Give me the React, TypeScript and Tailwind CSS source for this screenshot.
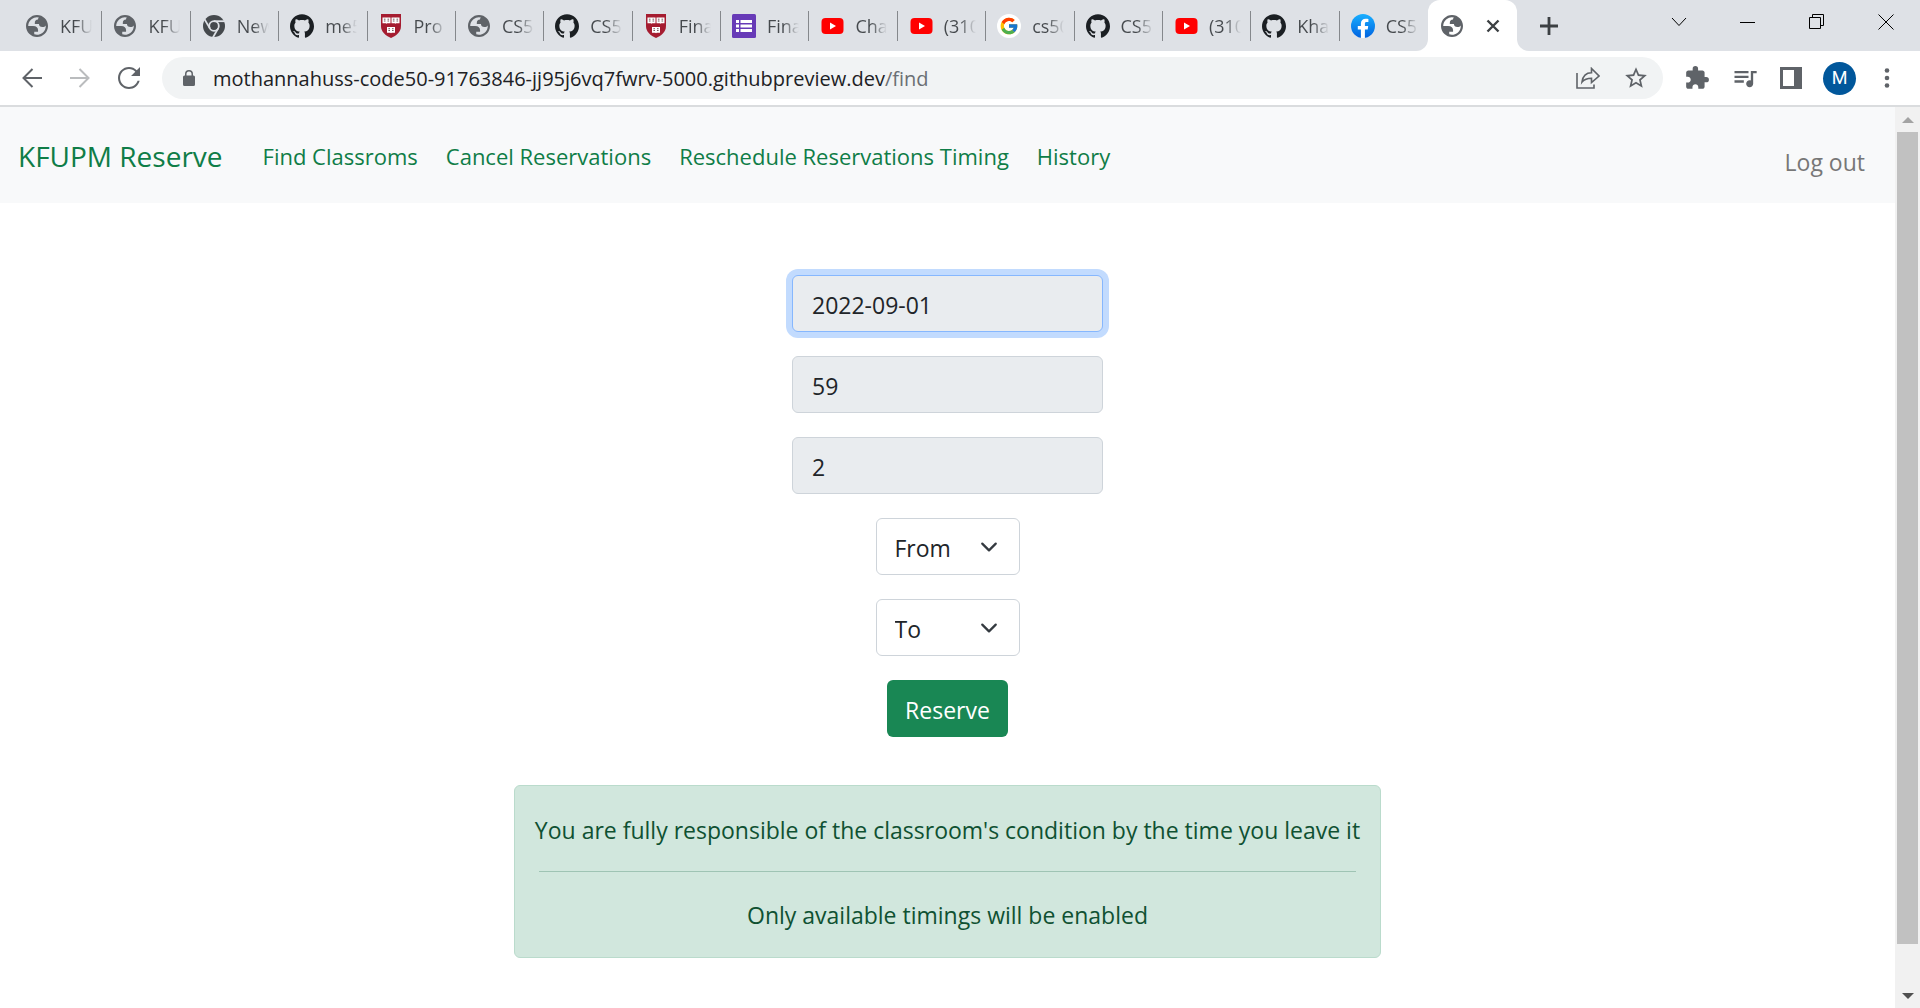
import React from "react";
import { FcGoogle } from "react-icons/fc";
import { MdExtension, MdQueueMusic, MdStarBorder } from "react-icons/md";
import { SiGithub } from "react-icons/si";

type Site = "globe" | "chrome" | "github" | "harvard" | "forms" | "youtube" | "google" | "facebook";

const tabs: { site: Site; title: string }[] = [
  { site: "globe", title: "KFU" },
  { site: "globe", title: "KFU" },
  { site: "chrome", title: "New" },
  { site: "github", title: "me5" },
  { site: "harvard", title: "Pro" },
  { site: "globe", title: "CS5" },
  { site: "github", title: "CS5" },
  { site: "harvard", title: "Fina" },
  { site: "forms", title: "Fina" },
  { site: "youtube", title: "Cha" },
  { site: "youtube", title: "(310" },
  { site: "google", title: "cs50" },
  { site: "github", title: "CS5" },
  { site: "youtube", title: "(310" },
  { site: "github", title: "Kha" },
  { site: "facebook", title: "CS5" },
];

function Globe() {
  return (
    <svg viewBox="2 2 20 20" className="size-[22px] fill-[#5f6368]">
      <path
        fillRule="evenodd"
        d="M12 2C6.480 2 2 6.480 2 12s4.480 10 10 10 10-4.480 10-10S17.520 2 12 2zM4 12h4.400c3.407.022 4.922 1.730 4.543 5.127H9.488v2.470a8.004 8.004 0 0 0 10.498-8.083C19.327 12.504 18.332 13 17 13c-2.137 0-3.206-.916-3.206-2.750h-3.748c-.274-2.728.683-4.092 2.870-4.092 0-.975.327-1.597.811-1.970A8.004 8.004 0 0 0 4 12z"
      />
    </svg>
  );
}

function Book({ x, y }: { x: number; y: number }) {
  return (
    <g transform={`translate(${x} ${y})`}>
      <path d="M0 .6h8v5.600H4.800L4 6.800l-.8-.6H0z" fill="#fff" />
      <path d="M1.400 2.200h1.600M1.400 4h1.600M5 2.200h1.600M5 4h1.600" stroke="#6b4a4e" strokeWidth=".9" />
    </g>
  );
}

function SiteIcon({ site }: { site: Site }) {
  switch (site) {
    case "globe":
      return <Globe />;
    case "chrome":
      return (
        <svg viewBox="0 0 22 22" className="size-[22px]">
          <circle cx="11" cy="11" r="11" fill="#45494d" />
          <g fill="none" stroke="#dee1e6" strokeWidth="1.8">
            <circle cx="11" cy="11" r="4.8" />
            <path d="M11 6.200h11" />
            <path d="M11 6.200h11" transform="rotate(120 11 11)" />
            <path d="M11 6.200h11" transform="rotate(240 11 11)" />
          </g>
        </svg>
      );
    case "github":
      return <SiGithub className="size-6 text-[#1b1f23]" />;
    case "google":
      return (
        <span className="flex size-6 items-center justify-center rounded-full bg-white">
          <FcGoogle className="size-5" />
        </span>
      );
    case "harvard":
      return (
        <svg viewBox="0 0 24 24" className="size-6">
          <path d="M2 0h20v12c0 6-4.500 9.500-10 12C6.500 21.500 2 18 2 12z" fill="#a51c30" />
          <Book x={3.5} y={3} />
          <Book x={12.5} y={3} />
          <Book x={8} y={12.5} />
        </svg>
      );
    case "forms":
      return (
        <svg viewBox="0 0 24 24" className="size-6">
          <rect width="24" height="24" rx="1.5" fill="#673ab7" />
          <path d="M4 6h3v3H4zM8.500 6H20v3H8.500zM4 10.500h3v3H4zM8.500 10.500H20v3H8.500zM4 15h3v3H4zM8.500 15H20v3H8.500z" fill="#fff" />
        </svg>
      );
    case "youtube":
      return (
        <svg viewBox="0 0 24 24" className="size-6">
          <rect x="1.5" y="4" width="22" height="16" rx="4" fill="#f00" />
          <path d="M10 8.500v7l6-3.500z" fill="#fff" />
        </svg>
      );
    case "facebook":
      return (
        <svg viewBox="0 0 24 24" className="size-6">
          <defs>
            <linearGradient id="fb" x1="0" y1="0" x2="0" y2="1">
              <stop offset="0" stopColor="#19afff" />
              <stop offset="1" stopColor="#0062e0" />
            </linearGradient>
          </defs>
          <circle cx="12" cy="12" r="12" fill="url(#fb)" />
          <path d="M16.700 15.500l.5-3.500h-3.300V9.800c0-1 .4-1.700 1.800-1.700h1.700V5c-.9-.1-1.900-.3-2.700-.3-2.800 0-4.800 1.700-4.800 4.800V12H6.800v3.500h3.100v8.400c.7.100 1.400.1 2 .1s1.300 0 2-.1v-8.400z" fill="#fff" />
        </svg>
      );
  }
}

function TabStrip() {
  return (
    <div className="flex h-[51px] shrink-0 bg-[#dee1e6] pl-[14px]">
      <div role="tablist" className="flex">
        <div className="flex w-[1414px] min-w-0">
          {tabs.map((tab, i) => (
            <button key={i} role="tab" aria-selected="false" className="flex min-w-0 flex-1 items-center pl-[11px]">
              <span className="flex size-6 shrink-0 items-center justify-center">
                <SiteIcon site={tab.site} />
              </span>
              <span className="ml-[11px] w-[32px] overflow-hidden bg-linear-to-r from-[#45494d] from-50% to-transparent bg-clip-text text-left text-lg leading-6 whitespace-nowrap text-transparent">
                {tab.title}
              </span>
              <span className={i < tabs.length - 1 ? "ml-auto h-[30px] w-px bg-[#85888c]" : "hidden"} />
            </button>
          ))}
        </div>
        <div role="tab" aria-selected="true" className="relative flex w-[89px] items-center justify-between rounded-t-xl bg-white pr-[17px] pl-[13px]">
          <span className="absolute bottom-0 -left-3 size-3 bg-white">
            <span className="block size-3 rounded-br-xl bg-[#dee1e6]" />
          </span>
          <span className="absolute -right-3 bottom-0 size-3 bg-white">
            <span className="block size-3 rounded-bl-xl bg-[#dee1e6]" />
          </span>
          <Globe />
          <button aria-label="Close tab">
            <svg viewBox="0 0 14 14" className="size-[14px] stroke-[#3c4043] stroke-[2.4]">
              <path d="M1.500 1.500l11 11M12.500 1.500l-11 11" />
            </svg>
          </button>
        </div>
      </div>
      <button aria-label="New tab" className="ml-[23px]">
        <svg viewBox="0 0 18 18" className="size-[18px] stroke-[#3c4043] stroke-[2.8]">
          <path d="M9 0v18M0 9h18" />
        </svg>
      </button>
      <div className="mr-[26px] mb-2 ml-auto flex items-center gap-[53px]">
        <button aria-label="Search tabs">
          <svg viewBox="0 0 16 16" className="size-4 fill-none stroke-black">
            <path d="M1 4l7 7.500L15 4" />
          </svg>
        </button>
        <button aria-label="Minimize">
          <svg viewBox="0 0 16 16" className="size-4 stroke-black">
            <path d="M0 8.500h15" />
          </svg>
        </button>
        <button aria-label="Restore">
          <svg viewBox="0 0 16 16" className="size-4 fill-none stroke-black">
            <path d="M.5 3.500h11v11H.5zM3.500 3.500v-3h11v11h-3" />
          </svg>
        </button>
        <button aria-label="Close">
          <svg viewBox="0 0 16 16" className="size-4 stroke-black">
            <path d="M.5.5l15 15M15.500.5l-15 15" />
          </svg>
        </button>
      </div>
    </div>
  );
}

function Toolbar() {
  return (
    <div className="flex h-14 shrink-0 items-center border-b-2 border-[#dadcde] bg-white text-[#5f6368]">
      <div className="flex items-center gap-7 pr-[22px] pl-[22px]">
        <button aria-label="Back">
          <svg viewBox="0 0 20 20" className="size-5 fill-none stroke-[#5f6368] stroke-2">
            <path d="M20 10H1.500M10.500 1L1.500 10l9 9" />
          </svg>
        </button>
        <button aria-label="Forward">
          <svg viewBox="0 0 20 20" className="size-5 fill-none stroke-[#babcbe] stroke-2">
            <path d="M0 10h18.500M9.500 1l9 9-9 9" />
          </svg>
        </button>
        <button aria-label="Reload">
          <svg viewBox="4 4 16 16" className="size-[22px] fill-current">
            <path d="M17.650 6.350C16.200 4.900 14.210 4 12 4c-4.420 0-7.990 3.580-7.990 8s3.570 8 7.990 8c3.730 0 6.840-2.550 7.730-6h-1.500c-.82 2.600-3.300 4.500-6.230 4.500-3.590 0-6.500-2.910-6.500-6.500s2.910-6.500 6.500-6.500c1.800 0 3.410.75 4.570 1.930L13.500 10.500H20V4z" />
          </svg>
        </button>
      </div>
      <div className="flex h-[42px] min-w-0 flex-1 items-center rounded-full bg-[#f1f3f4] pr-[14px] pl-[21px]">
        <svg viewBox="0 0 12 16" className="h-4 w-3 shrink-0 fill-[#5f6368]">
          <path
            fillRule="evenodd"
            d="M1.500 5.500H2V4a4 4 0 0 1 8 0v1.500h.5A1.500 1.500 0 0 1 12 7v7.500a1.500 1.500 0 0 1-1.500 1.500h-9A1.500 1.500 0 0 1 0 14.500V7a1.500 1.500 0 0 1 1.500-1.500zM3.500 5.500h5V4a2.500 2.500 0 0 0-5 0z"
          />
        </svg>
        <span className="min-w-0 flex-1 truncate pt-px pl-[18px] text-xl text-[#202124]">
          mothannahuss-code50-91763846-jj95j6vq7fwrv-5000.githubpreview.dev<span className="text-[#6b6f73]">/find</span>
        </span>
        <button aria-label="Share" className="mr-[23px]">
          <svg viewBox="0 0 24 22" className="h-[22px] w-6 fill-none stroke-[#5f6368] stroke-[1.6]">
            <path d="M1 6v15h17v-3.500" />
            <path d="M6 15c.8-6 4-9.200 9.500-9.200V1.500L23 9l-7.500 6.500v-4.300C11 11.200 8.500 12 6 15z" />
          </svg>
        </button>
        <button aria-label="Bookmark this tab">
          <MdStarBorder className="size-[26px]" />
        </button>
      </div>
      <div className="flex items-center gap-[21px] pr-[23px] pl-[21px]">
        <button aria-label="Extensions">
          <MdExtension className="size-[26px]" />
        </button>
        <button aria-label="Media">
          <MdQueueMusic className="size-7" />
        </button>
        <button aria-label="Side panel">
          <svg viewBox="0 0 22 22" className="size-[22px] fill-[#5f6368]">
            <path fillRule="evenodd" d="M0 0h22v22H0zM3 3v16h11V3z" />
          </svg>
        </button>
        <button aria-label="Profile" className="flex size-[33px] items-center justify-center rounded-full bg-[#01579b] font-['Roboto',sans-serif] text-lg text-white">
          M
        </button>
        <button aria-label="Menu" className="flex w-[20px] justify-center">
          <svg viewBox="0 0 6 20" className="h-5 w-[6px] fill-[#5f6368]">
            <circle cx="3" cy="2.500" r="2.300" />
            <circle cx="3" cy="10" r="2.300" />
            <circle cx="3" cy="17.500" r="2.300" />
          </svg>
        </button>
      </div>
    </div>
  );
}

function Navbar() {
  return (
    <nav className="flex items-center bg-[#f8f9fa] px-[18px] py-6 text-[22px] leading-8 text-[#0f7d47]">
      <a href="#" className="mr-10 pt-0.5 text-[28px] leading-[46px]">
        KFUPM Reserve
      </a>
      <div className="flex gap-7 pt-0.5">
        <a href="#">Find Classroms</a>
        <a href="#">Cancel Reservations</a>
        <a href="#">Reschedule Reservations Timing</a>
        <a href="#">History</a>
      </div>
      <a href="#" className="mr-3 ml-auto pt-[14px] text-[23px] text-[#777]">
        Log out
      </a>
    </nav>
  );
}

function Field({ label, value, focused = false }: { label: string; value: string; focused?: boolean }) {
  return (
    <input
      aria-label={label}
      readOnly
      value={value}
      className={
        focused
          ? "h-[57px] w-[311px] rounded-md border border-[#86b7fe] bg-[#e9ecef] px-[19px] pt-0.5 leading-9 text-[#212529] ring-[6px] ring-[#c2dbfe] outline-none"
          : "h-[57px] w-[311px] rounded-md border border-[#ced4da] bg-[#e9ecef] px-[19px] pt-0.5 leading-9 text-[#212529] outline-none"
      }
    />
  );
}

function Picker({ label }: { label: string }) {
  return (
    <div className="relative">
      <select
        aria-label={label}
        className="h-[57px] w-36 appearance-none rounded-md border border-[#ced4da] bg-white px-[18px] pt-0.5 leading-9 text-[#212529]"
      >
        <option>{label}</option>
      </select>
      <svg viewBox="0 0 16 16" className="pointer-events-none absolute top-5 right-[22px] size-[18px] fill-none stroke-[#343a40] stroke-2">
        <path d="M2 5l6 6 6-6" strokeLinecap="round" strokeLinejoin="round" />
      </svg>
    </div>
  );
}

function Scrollbar() {
  return (
    <div className="flex w-[25px] shrink-0 flex-col items-center bg-[#f1f1f1]">
      <svg viewBox="0 0 12 6" className="mt-[10px] mb-[9px] h-[6px] w-3 fill-[#a3a3a3]">
        <path d="M6 0l6 6H0z" />
      </svg>
      <div className="w-[21px] flex-1 bg-[#c1c1c1]" />
      <svg viewBox="0 0 12 6" className="mt-[49px] mb-[9px] h-[6px] w-3 fill-[#505050]">
        <path d="M0 0h12L6 6z" />
      </svg>
    </div>
  );
}

export default function App() {
  return (
    <div className="flex h-screen flex-col overflow-hidden bg-white font-['Open_Sans','Noto_Sans',sans-serif]">
      <TabStrip />
      <Toolbar />
      <div className="flex min-h-0 flex-1">
        <div className="min-w-0 flex-1 overflow-hidden">
          <Navbar />
          <main className="flex flex-col items-center px-6 pt-[72px] text-[23px]">
            <form className="flex flex-col items-center gap-6" onSubmit={(e) => e.preventDefault()}>
              <Field label="Date" value="2022-09-01" focused />
              <Field label="Building" value="59" />
              <Field label="Room" value="2" />
              <Picker label="From" />
              <Picker label="To" />
              <button className="h-[57px] rounded-md bg-[#198754] px-[18px] pt-0.5 leading-9 text-white">Reserve</button>
            </form>
            <div className="mt-12 rounded-md border border-[#badbcc] bg-[#d1e7dd] px-5 py-6 text-center leading-9 text-[#0f5132]">
              <p className="pt-0.5">You are fully responsible of the classroom's condition by the time you leave it</p>
              <hr className="mx-1 mt-[23px] mb-6 border-[#9fc4b4]" />
              <p className="pt-px">Only available timings will be enabled</p>
            </div>
          </main>
        </div>
        <Scrollbar />
      </div>
    </div>
  );
}
